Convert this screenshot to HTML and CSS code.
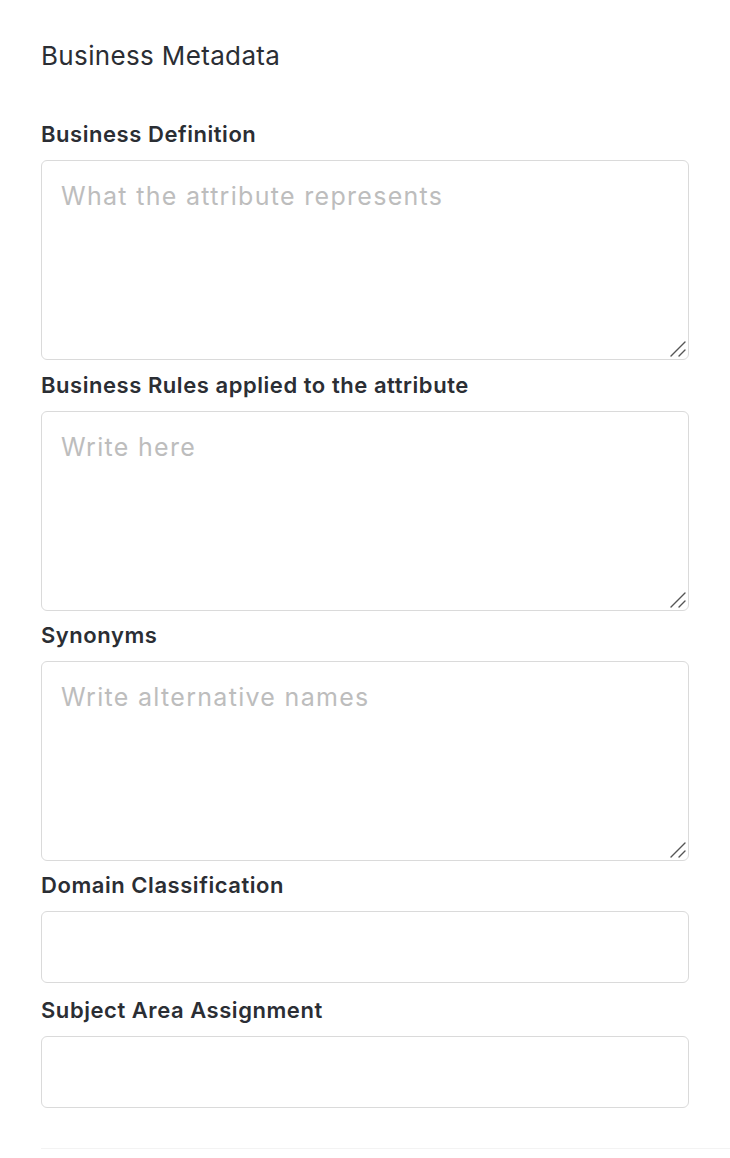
FILE: index.html
```html
<!DOCTYPE html>
<html lang="en">
<head>
<meta charset="utf-8">
<title>Business Metadata</title>
<link rel="stylesheet" href="styles.css">
</head>
<body>
<main class="panel">
  <h2 class="panel-title">Business Metadata</h2>
  <form class="meta-form">
    <div class="field">
      <label class="field-label" for="definition">Business Definition</label>
      <div class="area-wrap">
        <textarea id="definition" class="field-area" placeholder="What the attribute represents"></textarea>
        <svg class="grip" width="18" height="18" viewBox="0 0 18 18" aria-hidden="true">
          <path d="M2 16 L16 2 M10 16 L16 10" stroke="#555" stroke-width="1.4" stroke-linecap="round" fill="none"/>
        </svg>
      </div>
    </div>
    <div class="field field-second">
      <label class="field-label" for="rules">Business Rules applied to the attribute</label>
      <div class="area-wrap">
        <textarea id="rules" class="field-area" placeholder="Write here"></textarea>
        <svg class="grip" width="18" height="18" viewBox="0 0 18 18" aria-hidden="true">
          <path d="M2 16 L16 2 M10 16 L16 10" stroke="#555" stroke-width="1.4" stroke-linecap="round" fill="none"/>
        </svg>
      </div>
    </div>
    <div class="field">
      <label class="field-label" for="synonyms">Synonyms</label>
      <div class="area-wrap">
        <textarea id="synonyms" class="field-area" placeholder="Write alternative names"></textarea>
        <svg class="grip" width="18" height="18" viewBox="0 0 18 18" aria-hidden="true">
          <path d="M2 16 L16 2 M10 16 L16 10" stroke="#555" stroke-width="1.4" stroke-linecap="round" fill="none"/>
        </svg>
      </div>
    </div>
    <div class="field field-input">
      <label class="field-label" for="domain">Domain Classification</label>
      <input id="domain" class="field-box" type="text">
    </div>
    <div class="field field-input">
      <label class="field-label" for="subject">Subject Area Assignment</label>
      <input id="subject" class="field-box" type="text">
    </div>
  </form>
  <hr class="divider">
</main>
</body>
</html>
```

FILE: styles.css
```css
html, body {
  margin: 0;
  padding: 0;
  background: #ffffff;
}

body {
  font-family: Inter, "Noto Sans", sans-serif;
  color: #2b2e34;
}

.panel {
  padding: 41px 0 0 41px;
}

.panel-title {
  margin: 0 41px 51px 0;
  font-size: 26px;
  line-height: 30px;
  font-weight: 400;
  letter-spacing: 0.35px;
  color: #2b2e34;
}

.meta-form {
  display: flex;
  flex-direction: column;
  gap: 12px;
  padding-right: 41px;
}

.field {
  display: flex;
  flex-direction: column;
  gap: 14px;
}

.field-second {
  margin-top: 1px;
}

.field-input + .field-input {
  margin-top: 3px;
}

.field-label {
  font-size: 22px;
  line-height: 24px;
  font-weight: 600;
  letter-spacing: 0.55px;
  color: #2b2e34;
}

.area-wrap {
  position: relative;
}

.field-area,
.field-box {
  box-sizing: border-box;
  width: 100%;
  margin: 0;
  border: 1px solid #dadada;
  border-radius: 6px;
  background: #ffffff;
  font-family: Inter, "Noto Sans", sans-serif;
  font-size: 25px;
  letter-spacing: 1.3px;
  color: #2b2e34;
  outline: none;
}

.field-area {
  display: block;
  height: 200px;
  padding: 18px 19px;
  line-height: 34px;
  resize: none;
}

/* drag grip drawn in the bottom-right corner of each textarea */
.grip {
  position: absolute;
  right: 2px;
  bottom: 2px;
  pointer-events: none;
}

.field-box {
  display: block;
  height: 72px;
  padding: 0 19px;
}

.field-area::placeholder,
.field-box::placeholder {
  color: #bdbdbd;
}

.divider {
  margin: 40px 0 0 0;
  border: 0;
  border-top: 1px solid #f3f3f3;
  height: 0;
}
```
